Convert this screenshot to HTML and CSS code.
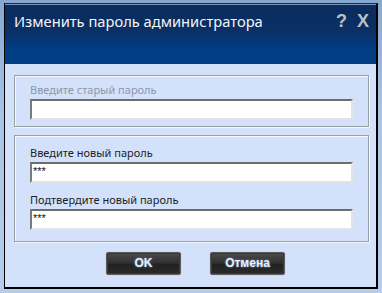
FILE: index.html
```html
<!DOCTYPE html>
<html>
<head>
<meta charset="utf-8">
<link rel="stylesheet" href="styles.css">
</head>
<body>
<div class="desktop">
  <div class="dialog">
    <div class="titlebar">
      <span class="title">Изменить пароль администратора</span>
      <span class="tools"><span class="help">?</span><span class="close">X</span></span>
    </div>
    <div class="content">
      <div class="group group-old">
        <div class="label disabled">Введите старый пароль</div>
        <div class="input"></div>
      </div>
      <div class="group group-new">
        <div class="label">Введите новый пароль</div>
        <div class="input">***</div>
        <div class="label second">Подтвердите новый пароль</div>
        <div class="input">***</div>
      </div>
      <div class="buttons">
        <div class="btn">OK</div>
        <div class="btn">Отмена</div>
      </div>
    </div>
  </div>
</div>
</body>
</html>
```
FILE: styles.css
```css
html, body {
  margin: 0;
  padding: 0;
}
body {
  width: 382px;
  height: 293px;
  overflow: hidden;
  font-family: "Noto Sans", "Open Sans", sans-serif;
}
.desktop {
  width: 382px;
  height: 293px;
  background: linear-gradient(180deg, #86a7d2 0%, #aac4e7 40%, #b6cdec 100%);
  padding: 3px 0 0 4px;
  box-sizing: border-box;
}
.dialog {
  width: 374px;
  height: 286px;
  border-left: 1px solid #000;
  border-top: 1px solid #1a2a44;
  border-right: 2px solid #000;
  border-bottom: 2px solid #000;
  box-sizing: border-box;
  display: flex;
  flex-direction: column;
  background: #d3e1fb;
}
.titlebar {
  height: 60px;
  flex: none;
  background: linear-gradient(180deg, #0b2b5c 0%, #0a3065 45%, #023d82 75%, #013e84 100%);
  display: flex;
  align-items: flex-start;
  justify-content: space-between;
  padding: 7px 7px 0 9px;
  box-sizing: border-box;
  box-shadow: inset 0 1px 0 #7f93b3;
}
.title {
  color: #f2f5fa;
  font-size: 14.7px;
  line-height: 20px;
}
.tools {
  display: flex;
  gap: 10px;
  color: #b9c0c8;
  font-family: "Liberation Sans", Arial, sans-serif;
  font-weight: bold;
  font-size: 18px;
  line-height: 20px;
}
.content {
  flex: 1;
  padding: 11px 7px 0 9px;
  display: flex;
  flex-direction: column;
}
.group {
  border: 1px solid #9aa0a8;
  box-shadow: inset 1px 1px 0 #f4f7fd, 1px 1px 0 #f4f7fd;
  padding: 0 15px 0 15px;
}
.group-old {
  height: 52px;
  box-sizing: border-box;
  padding-top: 6px;
}
.group-new {
  margin-top: 8px;
  height: 107px;
  box-sizing: border-box;
  padding-top: 9px;
}
.label {
  font-size: 11px;
  line-height: 16px;
  color: #1b1f26;
  height: 17px;
}
.label.disabled {
  color: #8d97a6;
}
.label.second {
  margin-top: 9px;
}
.input {
  height: 21px;
  box-sizing: border-box;
  background: #fff;
  border-top: 2px solid #6d6d6d;
  border-left: 2px solid #7a7a7a;
  border-right: 2px solid #e3e3e3;
  border-bottom: 2px solid #e3e3e3;
  font-family: "Liberation Sans", Arial, sans-serif;
  font-size: 11px;
  line-height: 14px;
  padding-left: 1px;
  color: #111;
}
.buttons {
  display: flex;
  justify-content: center;
  gap: 29px;
  margin-top: 10px;
  padding-left: 8px;
}
.btn {
  width: 75px;
  height: 23px;
  box-sizing: border-box;
  border: 1px solid #5c5c5c;
  border-radius: 2px;
  background: linear-gradient(180deg, #4a4a4a 0%, #333 45%, #222 55%, #2a2a2a 100%);
  box-shadow: inset 0 0 0 1px #3a3a3a, 0 0 1px rgba(0,0,0,0.4);
  color: #e6eef8;
  font-family: "Liberation Sans", Arial, sans-serif;
  font-weight: bold;
  font-size: 12px;
  line-height: 21px;
  text-align: center;
  text-shadow: 0 0 2px #7fa9d9;
}
```
